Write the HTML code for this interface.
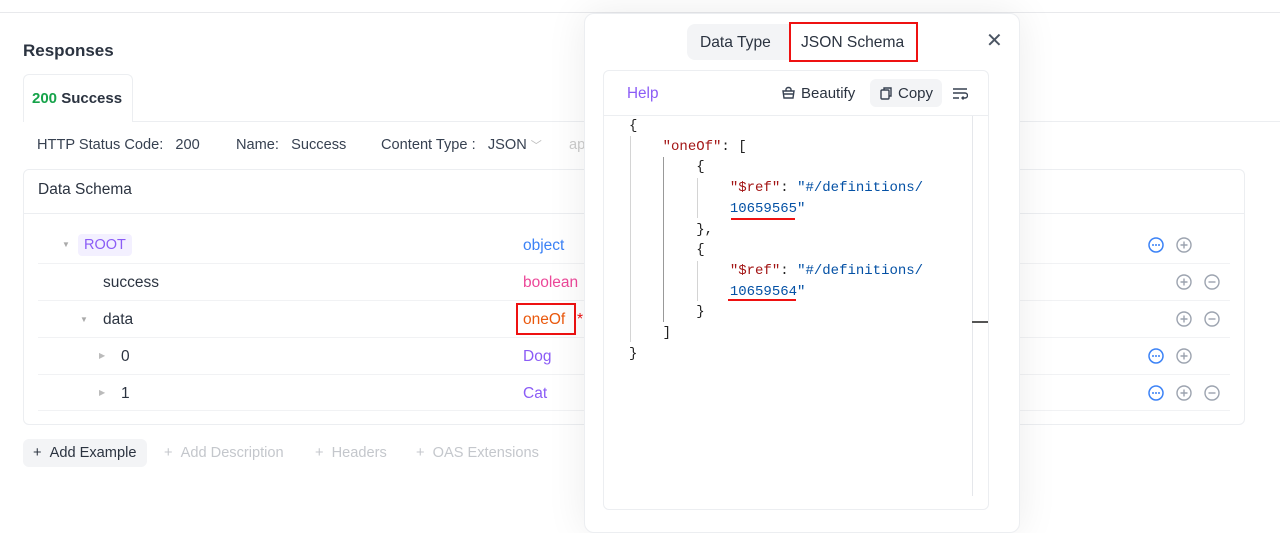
<!DOCTYPE html>
<html><head><meta charset="utf-8"><style>
*{box-sizing:border-box;margin:0;padding:0}
body{width:1280px;height:490px;overflow:hidden;background:#fff;font-family:"Liberation Sans",sans-serif;color:#1f2937;position:relative}
.abs{position:absolute;white-space:nowrap}
.topline{position:absolute;left:0;top:12px;width:1280px;height:1px;background:#e8e9ec}
.mono{font-family:"Liberation Mono",monospace;font-size:14px}
.row{position:absolute;left:38px;width:1192px;height:1px;background:#f1f2f4}
.ic{position:absolute}
.vl{position:absolute;width:1px;background:#d4d4d4}
</style></head><body>
<svg width="0" height="0" style="position:absolute"><defs>
<g id="plus"><circle cx="8" cy="8" r="7" fill="none" stroke="#9ca3af" stroke-width="1.4"/><path d="M4.5 8h7M8 4.5v7" stroke="#9ca3af" stroke-width="1.4"/></g>
<g id="minus"><circle cx="8" cy="8" r="7" fill="none" stroke="#9ca3af" stroke-width="1.4"/><path d="M4.5 8h7" stroke="#9ca3af" stroke-width="1.4"/></g>
<g id="dots"><circle cx="8" cy="8" r="7" fill="none" stroke="#3b82f6" stroke-width="1.5"/><circle cx="5" cy="8" r="1" fill="#3b82f6"/><circle cx="8" cy="8" r="1" fill="#3b82f6"/><circle cx="11" cy="8" r="1" fill="#3b82f6"/></g>
</defs></svg>
<div class="topline"></div>
<div class="abs" style="left:23px;top:41px;font-size:17px;font-weight:bold;color:#2b3340">Responses</div>
<div style="position:absolute;left:23px;top:74px;width:110px;height:48px;border:1px solid #eceef1;border-bottom:none;border-radius:6px 6px 0 0;background:#fff"></div>
<div class="abs" style="left:32px;top:90px;font-size:15px;font-weight:bold"><span style="color:#16a34a">200</span> <span style="color:#2b3340">Success</span></div>
<div style="position:absolute;left:133px;top:121px;width:1147px;height:1px;background:#eceef1"></div>
<div class="abs" style="left:37px;top:137px;font-size:14.6px;color:#374151">HTTP Status Code:&nbsp;&nbsp; 200</div>
<div class="abs" style="left:236px;top:137px;font-size:14.6px;color:#374151">Name:&nbsp;&nbsp; Success</div>
<div class="abs" style="left:381px;top:137px;font-size:14.6px;color:#374151">Content Type :&nbsp;&nbsp; JSON <span style="color:#bbb;font-size:11px">﹀</span></div>
<div class="abs" style="left:569px;top:137px;font-size:14.6px;color:#ccc">ap</div>
<div style="position:absolute;left:23px;top:169px;width:1222px;height:256px;border:1px solid #eceef1;border-radius:6px"></div>
<div class="abs" style="left:38px;top:181px;font-size:15.5px;color:#2b3340">Data Schema</div>
<div style="position:absolute;left:24px;top:213px;width:1220px;height:1px;background:#eceef1"></div>
<div class="row" style="top:263px"></div><div class="row" style="top:300px"></div><div class="row" style="top:337px"></div><div class="row" style="top:374px"></div><div class="row" style="top:410px"></div>
<div class="abs" style="left:62px;top:240px;font-size:8px;color:#aaa">▼</div>
<div class="abs" style="left:78px;top:234px;height:22px;padding:3px 6px;background:#f3f0ff;border-radius:4px;color:#8b5cf6;font-size:14.5px">ROOT</div>
<div class="abs" style="left:523px;top:237px;font-size:15.5px;color:#3b82f6">object</div>
<div class="abs" style="left:103px;top:274px;font-size:15.5px;color:#2b3340">success</div>
<div class="abs" style="left:523px;top:274px;font-size:15.5px;color:#ec4899">boolean</div>
<div class="abs" style="left:80px;top:315px;font-size:8px;color:#aaa">▼</div>
<div class="abs" style="left:103px;top:311px;font-size:15.5px;color:#2b3340">data</div>
<div style="position:absolute;left:516px;top:303px;width:60px;height:32px;border:2px solid #e11;"></div>
<div class="abs" style="left:523px;top:311px;font-size:15.5px;color:#ea580c">oneOf</div>
<div class="abs" style="left:577px;top:311px;font-size:15.5px;color:#e11">*</div>
<div class="abs" style="left:99px;top:351px;font-size:8px;color:#bbb">▶</div>
<div class="abs" style="left:121px;top:348px;font-size:15.5px;color:#2b3340">0</div>
<div class="abs" style="left:523px;top:348px;font-size:15.5px;color:#8b5cf6">Dog</div>
<div class="abs" style="left:99px;top:388px;font-size:8px;color:#bbb">▶</div>
<div class="abs" style="left:121px;top:385px;font-size:15.5px;color:#2b3340">1</div>
<div class="abs" style="left:523px;top:385px;font-size:15.5px;color:#8b5cf6">Cat</div>
<svg class="ic" style="left:1148px;top:237px" width="16" height="16"><use href="#dots"/></svg>
<svg class="ic" style="left:1176px;top:237px" width="16" height="16"><use href="#plus"/></svg>
<svg class="ic" style="left:1176px;top:274px" width="16" height="16"><use href="#plus"/></svg>
<svg class="ic" style="left:1204px;top:274px" width="16" height="16"><use href="#minus"/></svg>
<svg class="ic" style="left:1176px;top:311px" width="16" height="16"><use href="#plus"/></svg>
<svg class="ic" style="left:1204px;top:311px" width="16" height="16"><use href="#minus"/></svg>
<svg class="ic" style="left:1148px;top:348px" width="16" height="16"><use href="#dots"/></svg>
<svg class="ic" style="left:1176px;top:348px" width="16" height="16"><use href="#plus"/></svg>
<svg class="ic" style="left:1148px;top:385px" width="16" height="16"><use href="#dots"/></svg>
<svg class="ic" style="left:1176px;top:385px" width="16" height="16"><use href="#plus"/></svg>
<svg class="ic" style="left:1204px;top:385px" width="16" height="16"><use href="#minus"/></svg>
<div class="abs" style="left:23px;top:439px;width:124px;height:28px;background:#f3f4f6;border-radius:6px"></div>
<div class="abs" style="left:33px;top:445px;font-size:14.6px;color:#2b3340">+ &nbsp;Add Example</div>
<div class="abs" style="left:164px;top:445px;font-size:14.6px;color:#c4c7cc">+ &nbsp;Add Description</div>
<div class="abs" style="left:315px;top:445px;font-size:14.6px;color:#c4c7cc">+ &nbsp;Headers</div>
<div class="abs" style="left:416px;top:445px;font-size:14.6px;color:#c4c7cc">+ &nbsp;OAS Extensions</div>

<!-- modal -->
<div style="position:absolute;left:584px;top:13px;width:436px;height:520px;background:#fff;border:1px solid #eceef1;border-radius:10px;box-shadow:0 0 40px rgba(0,0,0,0.08)"></div>
<div class="abs" style="left:687px;top:24px;width:230px;height:36px;background:#f3f4f6;border-radius:8px"></div>
<div class="abs" style="left:700px;top:34px;font-size:15.6px;color:#2b3340">Data Type</div>
<div class="abs" style="left:789px;top:22px;width:129px;height:40px;border:2px solid #e11;background:#fff"></div>
<div class="abs" style="left:801px;top:34px;font-size:15.6px;color:#2b3340">JSON Schema</div>
<div class="abs" style="left:986px;top:28px;font-size:20px;color:#4b5563">✕</div>
<div style="position:absolute;left:603px;top:70px;width:386px;height:440px;border:1px solid #eceef1;border-radius:6px"></div>
<div style="position:absolute;left:604px;top:115px;width:384px;height:1px;background:#eceef1"></div>
<div style="position:absolute;left:972px;top:116px;width:1px;height:380px;background:#e5e7eb"></div>
<div style="position:absolute;left:972px;top:321px;width:16px;height:2px;background:#555"></div>
<div class="abs" style="left:627px;top:85px;font-size:15.3px;color:#8b5cf6">Help</div>
<svg class="abs" style="left:781px;top:86px" width="15" height="14" viewBox="0 0 15 14" fill="none" stroke="#374151" stroke-width="1.4"><path d="M2 5h11l-1 7H3z M2 8h11 M5 5V3.5a2.5 2 0 0 1 5 0V5"/></svg>
<div class="abs" style="left:801px;top:85px;font-size:15px;color:#2b3340">Beautify</div>
<div class="abs" style="left:870px;top:79px;width:72px;height:28px;background:#f3f4f6;border-radius:6px"></div>
<svg class="abs" style="left:879px;top:86px" width="14" height="14" viewBox="0 0 14 14" fill="none" stroke="#374151" stroke-width="1.4"><rect x="2" y="4" width="8" height="9" rx="1"/><path d="M5 4V2h7v8h-2"/></svg>
<div class="abs" style="left:898px;top:85px;font-size:15px;color:#2b3340">Copy</div>
<svg class="abs" style="left:952px;top:87px" width="16" height="13" viewBox="0 0 16 13" fill="none" stroke="#374151" stroke-width="1.4"><path d="M1 2h14 M1 6h12a2.5 2.5 0 0 1 0 5h-3 M11.5 9.5l-1.5 1.5 1.5 1.5 M1 11h6"/></svg>
<div class="vl" style="left:630px;top:136px;height:206px"></div>
<div class="vl" style="left:663px;top:157px;height:165px;background:#999"></div>
<div class="vl" style="left:697px;top:178px;height:40px"></div>
<div class="vl" style="left:697px;top:261px;height:40px"></div>
<div class="abs mono" style="left:629px;top:116px;line-height:20.7px;color:#222;white-space:pre">{
    <span style="color:#a31515">"oneOf"</span>: [
        {
            <span style="color:#a31515">"$ref"</span>: <span style="color:#0451a5">"#/definitions/</span>
            <span style="color:#0451a5">10659565</span><span style="color:#0451a5">"</span>
        },
        {
            <span style="color:#a31515">"$ref"</span>: <span style="color:#0451a5">"#/definitions/</span>
            <span style="color:#0451a5">10659564</span><span style="color:#0451a5">"</span>
        }
    ]
}</div>
<div class="abs" style="left:731px;top:218px;width:64px;height:2px;background:#e11"></div>
<div class="abs" style="left:728px;top:299px;width:68px;height:2px;background:#e11"></div>
</body></html>
